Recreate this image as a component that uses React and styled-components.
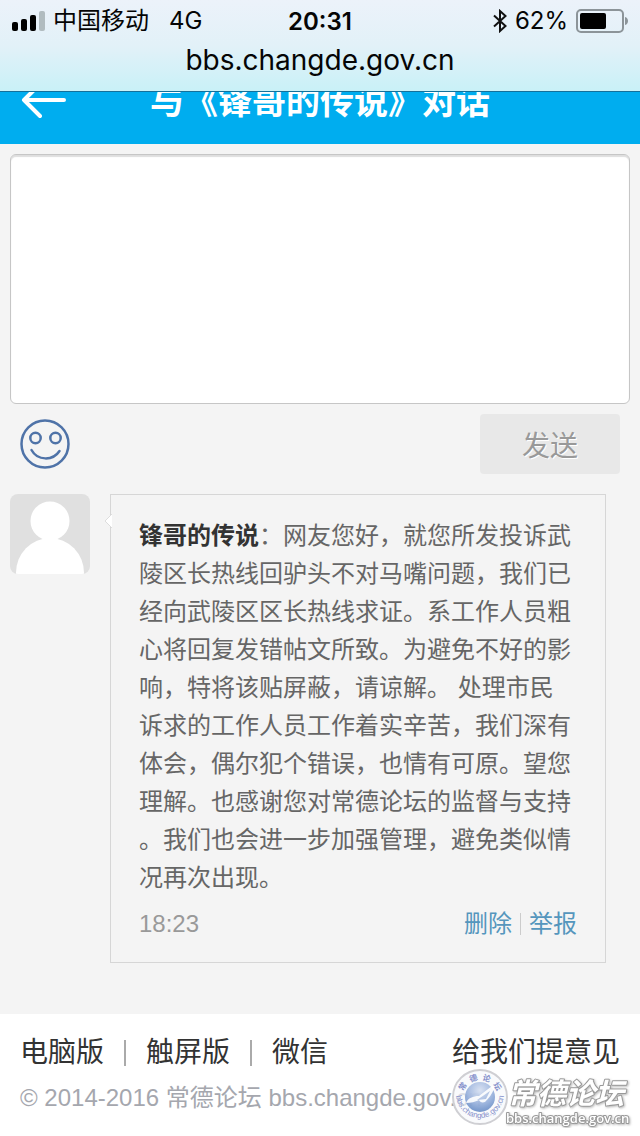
import React from 'react'
import styled, { createGlobalStyle } from 'styled-components'

const GlobalStyle = createGlobalStyle`
    * {
        box-sizing: border-box;
    }

    body {
        margin: 0;
        background-color: #f4f4f4;
        font-family: "Liberation Sans", "Noto Sans CJK SC", sans-serif;
        text-spacing-trim: space-all;
    }
`

const Page = styled.div`
    display: flex;
    flex-direction: column;
    min-height: 100vh;
`

const StatusBar = styled.div`
    position: relative;
    z-index: 1;
    padding: 4px 12px 15px;
    background: linear-gradient(#ecf2fa, #e2f1f8 50%, #c9f1f7);
    border-bottom: 1px solid #14709a;
    color: #050505;
    font-family: Inter, "Noto Sans CJK SC", sans-serif;
    font-size: 24px;
`

const StatusRow = styled.div`
    display: grid;
    grid-template-columns: 1fr auto 1fr;
    align-items: center;
    height: 34px;
`

const StatusGroup = styled.div`
    display: flex;
    align-items: center;
    justify-content: ${props => props.$end ? 'flex-end' : 'flex-start'};
    gap: 8px;
    line-height: 34px;
    white-space: pre;
`

const Network = styled.span`
    margin-left: 12px;
`

const Clock = styled.span`
    font-weight: 600;
`

const Address = styled.div`
    height: 38px;
    line-height: 44px;
    font-size: 28px;
    text-align: center;
`

const Header = styled.header`
    display: grid;
    grid-template-columns: 48px 1fr 48px;
    align-items: center;
    height: 84px;
    margin-top: -32px;
    padding: 0 20px;
    background-color: #00adef;
    color: #fff;
`

const BackLink = styled.a`
    display: flex;
    color: #fff;
`

const Title = styled.h1`
    margin: 0;
    font-size: 34px;
    font-weight: 600;
    line-height: 40px;
    text-align: center;
`

const Main = styled.main`
    flex: 1;
    padding: 10px 10px 50px;
`

const ReplyForm = styled.form`
    display: flex;
    flex-direction: column;
    gap: 10px;
    margin-bottom: 20px;
`

const ReplyText = styled.textarea`
    display: block;
    width: 100%;
    height: 250px;
    padding: 10px;
    border: 1px solid #c6c6c6;
    border-radius: 6px;
    background-color: #fff;
    box-shadow: inset 0 2px 1px #dedede;
    font: inherit;
    font-size: 28px;
    resize: none;
    outline: none;
`

const ReplyTools = styled.div`
    display: flex;
    justify-content: space-between;
    align-items: center;
    padding: 0 10px;
`

const SmileyButton = styled.button`
    display: flex;
    padding: 0;
    border: 0;
    background: none;
`

const SendButton = styled.button`
    width: 140px;
    height: 60px;
    padding: 0;
    border: 0;
    border-radius: 4px;
    background-color: #e8e8e8;
    color: #999;
    font: inherit;
    font-size: 28px;
    text-shadow: 1px 1px 0 #fff;
`

const Message = styled.article`
    display: flex;
    align-items: flex-start;
    gap: 20px;
    padding-right: 24px;
`

const Avatar = styled.svg`
    flex: none;
    width: 80px;
    height: 80px;
    border-radius: 8px;
    background-color: #e0e0e0;
`

const Bubble = styled.div`
    position: relative;
    flex: 1;
    padding: 22px 28px 19px;
    border: 1px solid #d6d6d6;
    font-size: 24px;
    line-height: 38px;
`

const BubbleTail = styled.svg`
    position: absolute;
    top: 19px;
    left: -7px;
`

const MessageText = styled.p`
    margin: 0 0 8px;
    color: #666;
    line-break: anywhere;
`

const Sender = styled.b`
    color: #333;
`

const MessageFoot = styled.div`
    display: flex;
    align-items: center;
    justify-content: space-between;
    color: #999;
`

const Actions = styled.div`
    display: flex;
    align-items: center;
    gap: 8px;
`

const ActionLink = styled.a`
    color: #5596bd;
    text-decoration: none;
`

const Divider = styled.span`
    width: ${props => props.$dark ? '2px' : '1px'};
    height: ${props => props.$dark ? '26px' : '22px'};
    background-color: ${props => props.$dark ? '#aaa' : '#ccc'};
`

const Footer = styled.footer`
    position: relative;
    padding: 18px 20px;
    background-color: #fff;
`

const FooterNav = styled.nav`
    display: flex;
    align-items: center;
    gap: 20px;
    height: 42px;
`

const FooterLink = styled.a`
    margin-left: ${props => props.$last ? 'auto' : '0'};
    color: #333;
    font-size: 28px;
    line-height: 40px;
    text-decoration: none;
`

const Copyright = styled.p`
    margin: 4px 0 0;
    color: #a5a7ae;
    font-size: 24px;
    line-height: 40px;
    white-space: nowrap;
`

const Watermark = styled.svg`
    position: absolute;
    right: 6px;
    bottom: 8px;
`

const SignalIcon = () => (
    <svg width="33" height="20" viewBox="0 0 33 20" aria-hidden="true">
        <rect x="0" y="11" width="6" height="9" rx="2" />
        <rect x="9" y="8" width="6" height="12" rx="2" />
        <rect x="18" y="4" width="6" height="16" rx="2" />
        <rect x="27" y="0" width="6" height="20" rx="2" fill="#b1bcc0" />
    </svg>
)

const BluetoothIcon = () => (
    <svg width="14" height="24" viewBox="0 0 14 24" fill="none" stroke="#111" strokeWidth="2" aria-hidden="true">
        <path d="M1 6.500 12.500 17 7 22V2l5.500 5L1 17.500" />
    </svg>
)

const BatteryIcon = () => (
    <svg width="52" height="24" viewBox="0 0 52 24" aria-hidden="true">
        <rect x="1" y="1" width="46" height="22" rx="4" fill="none" stroke="#8c9499" strokeWidth="2" />
        <rect x="4" y="4" width="26" height="16" rx="2" />
        <path d="M49 8c4 1 4 7 0 8z" fill="#8c9499" />
    </svg>
)

const ArrowIcon = () => (
    <svg width="48" height="40" viewBox="0 0 48 40" fill="none" stroke="currentColor" strokeWidth="4" strokeLinecap="round" strokeLinejoin="round" aria-hidden="true">
        <path d="M20 2 4 18l16 16M4 18h40" />
    </svg>
)

const SmileyIcon = () => (
    <svg width="50" height="50" viewBox="0 0 50 50" fill="none" stroke="#4f73a8" strokeWidth="2.500" strokeLinecap="round" aria-hidden="true">
        <circle cx="25" cy="25" r="23.500" />
        <circle cx="15.500" cy="19" r="5.200" />
        <circle cx="35.500" cy="19" r="5.200" />
        <path d="M11.500 31c6 11 21.500 11 28 1" />
    </svg>
)

const SiteWatermark = () => (
    <Watermark width="184" height="60" viewBox="0 0 184 60" aria-hidden="true">
        <defs>
            <radialGradient id="globe" cx="50%" cy="28%" r="70%">
                <stop offset="0" stopColor="#d3ddf0" />
                <stop offset="0.600" stopColor="#94aedb" />
                <stop offset="1" stopColor="#6288c4" />
            </radialGradient>
            <path id="ring-top" d="M12 30a18 18 0 0 1 36 0" />
            <path id="ring-bottom" d="M6 26a24 24 0 1 0 48 0" />
            <filter id="edge" x="-10%" y="-20%" width="120%" height="150%">
                <feDropShadow dx="1" dy="1" stdDeviation="1" floodColor="#888" floodOpacity="0.600" />
            </filter>
        </defs>
        <circle cx="30" cy="29" r="27" fill="#f7f8fb" fillOpacity="0.700" stroke="#cfcfd3" strokeWidth="2" />
        <circle cx="30" cy="29" r="15" fill="url(#globe)" fillOpacity="0.850" />
        <path d="M16 35c2-5 7-7 13-7l13-10c2 0 3 1 2 3-2 5-5 9-9 13-3 1-5 0-6-2-4 2-8 3-13 3zm11-3 9-1 4-8z" fill="#fff" fillOpacity="0.900" fillRule="evenodd" />
        <g fill="#8590cb" fontFamily="Noto Sans CJK SC, sans-serif">
            <text fontSize="8" fontWeight="700">
                <textPath href="#ring-top" startOffset="50%" textAnchor="middle">{'常\u00a0\u00a0德\u00a0\u00a0论\u00a0\u00a0坛'}</textPath>
            </text>
            <text fontSize="8" fontFamily="Liberation Sans, sans-serif">
                <textPath href="#ring-bottom" startOffset="50%" textAnchor="middle">bbs.changde.gov.cn</textPath>
            </text>
        </g>
        <g fill="#fff" stroke="#999" strokeWidth="2" paintOrder="stroke" strokeLinejoin="round" filter="url(#edge)">
            <text x="58" y="36" fontSize="29" fontWeight="700" fontStyle="italic" fontFamily="Noto Sans CJK SC, sans-serif">常德论坛</text>
            <text x="56" y="55" fontSize="13" fontWeight="600" fontFamily="Open Sans, sans-serif">bbs.changde.gov.cn</text>
        </g>
    </Watermark>
)

const App = () => {
    return (
        <Page>
            <GlobalStyle />
            <StatusBar>
                <StatusRow>
                    <StatusGroup>
                        <SignalIcon />
                        <span>中国移动</span>
                        <Network>4G</Network>
                    </StatusGroup>
                    <Clock>20:31</Clock>
                    <StatusGroup $end>
                        <BluetoothIcon />
                        <span>62%</span>
                        <BatteryIcon />
                    </StatusGroup>
                </StatusRow>
                <Address>bbs.changde.gov.cn</Address>
            </StatusBar>
            <Header>
                <BackLink href="#back" aria-label="返回">
                    <ArrowIcon />
                </BackLink>
                <Title>与《锋哥的传说》对话</Title>
            </Header>
            <Main>
                <ReplyForm>
                    <ReplyText aria-label="回复内容" />
                    <ReplyTools>
                        <SmileyButton type="button" aria-label="表情">
                            <SmileyIcon />
                        </SmileyButton>
                        <SendButton type="button">发送</SendButton>
                    </ReplyTools>
                </ReplyForm>
                <Message>
                    <Avatar viewBox="0 0 80 80" aria-hidden="true">
                        <g fill="#fff">
                            <circle cx="40" cy="27" r="19.500" />
                            <ellipse cx="40" cy="79" rx="34" ry="35" />
                        </g>
                    </Avatar>
                    <Bubble>
                        <BubbleTail width="8" height="14" viewBox="0 0 8 14" aria-hidden="true">
                            <path d="M8 0 1 7l7 7" fill="#fff" stroke="#ddd" />
                        </BubbleTail>
                        <MessageText>
                            <Sender>锋哥的传说</Sender>：网友您好，就您所发投诉武陵区长热线回驴头不对马嘴问题，我们已经向武陵区区长热线求证。系工作人员粗心将回复发错帖文所致。为避免不好的影响，特将该贴屏蔽，请谅解。 处理市民诉求的工作人员工作着实辛苦，我们深有体会，偶尔犯个错误，也情有可原。望您理解。也感谢您对常德论坛的监督与支持。我们也会进一步加强管理，避免类似情况再次出现。
                        </MessageText>
                        <MessageFoot>
                            <time>18:23</time>
                            <Actions>
                                <ActionLink href="#delete">删除</ActionLink>
                                <Divider />
                                <ActionLink href="#report">举报</ActionLink>
                            </Actions>
                        </MessageFoot>
                    </Bubble>
                </Message>
            </Main>
            <Footer>
                <FooterNav>
                    <FooterLink href="#pc">电脑版</FooterLink>
                    <Divider $dark />
                    <FooterLink href="#touch">触屏版</FooterLink>
                    <Divider $dark />
                    <FooterLink href="#wechat">微信</FooterLink>
                    <FooterLink href="#feedback" $last>给我们提意见</FooterLink>
                </FooterNav>
                <Copyright>© 2014-2016 常德论坛 bbs.changde.gov.cn</Copyright>
                <SiteWatermark />
            </Footer>
        </Page>
    )
}

export default App
